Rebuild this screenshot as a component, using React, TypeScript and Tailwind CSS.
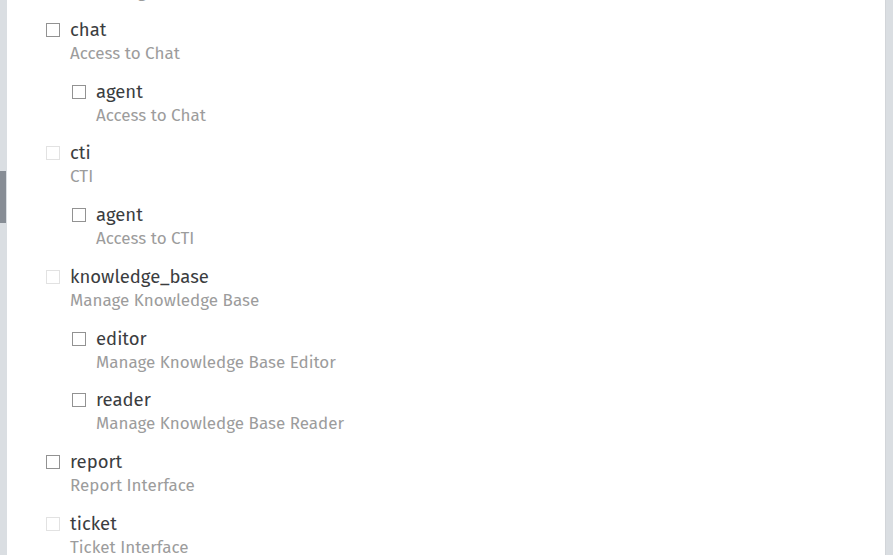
type Perm = {
  name: string;
  note: string;
  disabled?: boolean;
  children?: Perm[];
};

const perms: Perm[] = [
  {
    name: "chat",
    note: "Access to Chat",
    children: [{ name: "agent", note: "Access to Chat" }],
  },
  {
    name: "cti",
    note: "CTI",
    disabled: true,
    children: [{ name: "agent", note: "Access to CTI" }],
  },
  {
    name: "knowledge_base",
    note: "Manage Knowledge Base",
    disabled: true,
    children: [
      { name: "editor", note: "Manage Knowledge Base Editor" },
      { name: "reader", note: "Manage Knowledge Base Reader" },
    ],
  },
  { name: "report", note: "Report Interface" },
  { name: "ticket", note: "Ticket Interface", disabled: true },
];

function Row({ p }: { p: Perm }) {
  return (
    <div className="flex flex-col gap-[13.75px]">
      <label className="flex items-start gap-[10px]">
        <span
          className={
            p.disabled
              ? "mt-[5px] h-[14px] w-[14px] shrink-0 border border-[#e2e2e2] bg-white"
              : "mt-[5px] h-[14px] w-[14px] shrink-0 border border-[#929292] bg-white"
          }
        />
        <span className="flex flex-col">
          <span className="text-[18.5px] leading-6 text-[#3b3d3f]">{p.name}</span>
          <span className="text-[17px] leading-6 text-[#9c9c9c]">{p.note}</span>
        </span>
      </label>
      {p.children && (
        <div className="ml-[26px] flex flex-col gap-[13.75px]">
          {p.children.map((c) => (
            <Row key={c.name} p={c} />
          ))}
        </div>
      )}
    </div>
  );
}

export default function App() {
  return (
    <div
      className="flex h-[555px] w-[893px] overflow-hidden bg-white"
      style={{ fontFamily: '"Fira Sans", "Open Sans", "Noto Sans", sans-serif' }}
    >
      <div className="flex w-[7px] shrink-0 flex-col bg-[#dadee2]">
        <div className="h-[171px]" />
        <div className="h-[52px] w-[6px] bg-[#878d95]" />
      </div>
      <div className="flex flex-1 flex-col gap-[13.75px] pl-[39px]">
        <div className="mt-[-20px] pl-[50px] text-[17px] leading-6 text-[#9c9c9c]">
          Manage webhooks
        </div>
        {perms.map((p) => (
          <Row key={p.name} p={p} />
        ))}
      </div>
      <div className="w-[8px] shrink-0 border-l border-[#d2d5d9] bg-[#dadee2]" />
    </div>
  );
}
